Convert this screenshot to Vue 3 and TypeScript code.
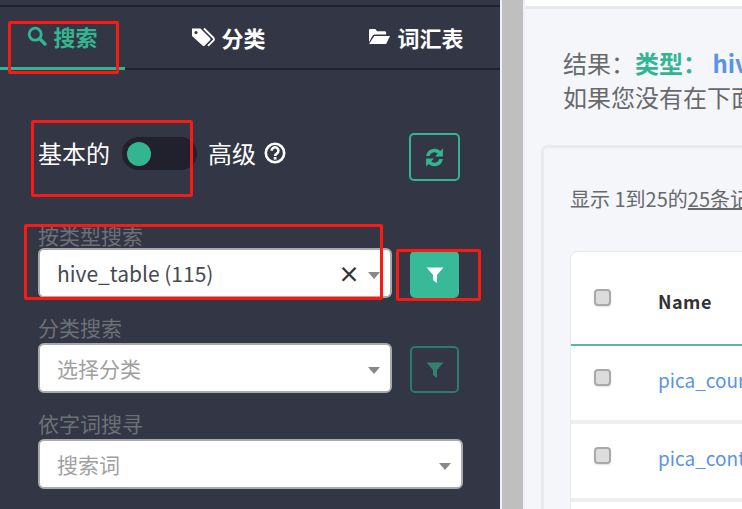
<script setup lang="ts">
const rows: string[] = ['pica_course_detail', 'pica_content_detail', '']
const tabs = [
  { label: '搜索', icon: 'search', active: true },
  { label: '分类', icon: 'tag', active: false },
  { label: '词汇表', icon: 'folder', active: false },
]
</script>

<template>
  <div class="page">
    <aside class="side">
      <nav class="tabs">
        <div v-for="t in tabs" :key="t.label" class="tab" :class="{ active: t.active }">
          <svg v-if="t.icon === 'search'" class="ti" viewBox="0 0 20 20" width="20" height="20"><circle cx="8.2" cy="8.2" r="6" fill="none" stroke="currentColor" stroke-width="2.8"/><path d="M12.5 12.5 18 18" stroke="currentColor" stroke-width="3.2" stroke-linecap="round"/></svg>
          <svg v-else-if="t.icon === 'tag'" class="ti" viewBox="0 0 24 20" width="24" height="20"><path d="M1 1.5h8.5L19 11a1.6 1.6 0 0 1 0 2.3l-5.2 5.2a1.6 1.6 0 0 1-2.3 0L1 9z" fill="currentColor"/><path d="M13 1.5 22.5 11a1.6 1.6 0 0 1 0 2.3L17 18.8" fill="none" stroke="currentColor" stroke-width="1.8"/><circle cx="5" cy="5.5" r="1.6" fill="#333645"/></svg>
          <svg v-else class="ti" viewBox="0 0 24 20" width="23" height="19"><path d="M1 16V3.5A1.5 1.5 0 0 1 2.500 2h5l2 2.500h8A1.500 1.500 0 0 1 19 6v2H7a3 3 0 0 0-2.700 1.700z" fill="currentColor"/><path d="M6.500 9.500H23l-4 8.500H1z" fill="currentColor"/></svg>
          <span>{{ t.label }}</span>
        </div>
      </nav>

      <div class="mode">
        <span class="mode-l">基本的</span>
        <span class="toggle"><i></i></span>
        <span class="mode-r">高级</span>
        <svg class="help" viewBox="0 0 22 22" width="22" height="22"><circle cx="11" cy="11" r="9.200" fill="none" stroke="#fff" stroke-width="2.600"/><path d="M7.600 8.800a3.400 3.400 0 1 1 5.200 2.800c-1.100.7-1.700 1.100-1.700 2.400" fill="none" stroke="#fff" stroke-width="2.600"/><rect x="9.700" y="15" width="2.800" height="2.600" fill="#fff"/></svg>
        <button class="btn refresh">
          <svg viewBox="0 0 20 20" width="21" height="21"><path d="M2 8.500a8 8 0 0 1 13.500-4.600L18 1.500V9h-7.500l2.700-2.700A4.800 4.800 0 0 0 5.400 8.500z" fill="#34b592"/><path d="M18 11.500a8 8 0 0 1-13.500 4.600L2 18.500V11h7.500l-2.700 2.700a4.800 4.800 0 0 0 7.800-2.200z" fill="#34b592"/></svg>
        </button>
      </div>

      <div class="lbl first">按类型搜索</div>
      <div class="fr tight">
        <div class="sel short"><span class="val">hive_table (115)</span><b class="x">×</b><i class="caret"></i></div>
        <button class="btn filter on">
          <svg viewBox="0 0 18 18" width="18" height="18"><path d="M0.500 1.500h17L11 9v8l-4-3V9z" fill="#fff"/></svg>
        </button>
      </div>

      <div class="lbl">分类搜索</div>
      <div class="fr">
        <div class="sel short"><span class="ph">选择分类</span><i class="caret"></i></div>
        <button class="btn filter off">
          <svg viewBox="0 0 18 18" width="18" height="18"><path d="M0.500 1.500h17L11 9v8l-4-3V9z" fill="#34806f"/></svg>
        </button>
      </div>

      <div class="lbl">依字词搜寻</div>
      <div class="fr">
        <div class="sel long"><span class="ph">搜索词</span><i class="caret"></i></div>
      </div>

      <div class="lbl">分文字搜寻</div>
    </aside>

    <div class="gutter"></div>

    <main class="main">
      <div class="topbar"></div>
      <div class="content">
        <p class="res">结果：<strong class="g">类型：</strong> <strong class="b">hive_table</strong></p>
        <p class="res">如果您没有在下面的结果中找到您要的内容</p>
        <section class="panel">
          <div class="count">显示 1到25的<u>25条记录</u></div>
          <div class="table">
            <div class="row head">
              <span class="cb"></span>
              <span class="name">Name</span>
            </div>
            <div v-for="(r, i) in rows" :key="i" class="row">
              <span class="cb"></span>
              <a class="link">{{ r }}</a>
            </div>
          </div>
        </section>
      </div>
    </main>

    <div class="mark m1"></div>
    <div class="mark m2"></div>
    <div class="mark m3"></div>
    <div class="mark m4"></div>
  </div>
</template>

<style>
html, body { margin: 0; overflow: hidden; }
</style>

<style scoped>
.page {
  position: relative;
  width: 742px;
  height: 509px;
  display: flex;
  overflow: hidden;
  font-family: "Noto Sans CJK SC", "Open Sans", sans-serif;
  background: #f5f6fa;
}
.side {
  width: 500px;
  flex: none;
  background: #333645;
  box-sizing: border-box;
  padding-top: 5px;
  overflow: hidden;
}
.tabs {
  height: 61px;
  display: flex;
  border-top: 2px solid #21222c;
  border-bottom: 2px solid #21222c;
}
.tab {
  height: 61px;
  box-sizing: border-box;
  display: flex;
  align-items: center;
  justify-content: center;
  gap: 6px;
  color: #fff;
  font-size: 22px;
  font-weight: 700;
  padding-bottom: 2px;
}
.tab:nth-child(1) { width: 125px; }
.tab:nth-child(2) { width: 207px; }
.tab:nth-child(3) { width: 168px; }
.tab.active { color: #34b592; border-bottom: 3px solid #34b592; height: 63px; }
.mode {
  display: flex;
  align-items: flex-start;
  height: 48px;
  margin-top: 63px;
  padding-left: 38px;
  color: #fff;
  font-size: 24px;
  line-height: 40px;
}
.toggle {
  width: 75px;
  height: 33px;
  border-radius: 17px;
  background: #20212c;
  margin: 4px 0 0 12px;
  display: flex;
  align-items: center;
  padding-left: 5px;
  box-sizing: border-box;
}
.toggle i { width: 24px; height: 24px; border-radius: 50%; background: #34b592; }
.mode-r { margin-left: 11px; }
.help { margin: 9px 0 0 8px; }
.btn {
  padding: 0;
  box-sizing: border-box;
  display: flex;
  align-items: center;
  justify-content: center;
  background: transparent;
  border-radius: 5px;
}
.refresh {
  width: 51px;
  height: 48px;
  border: 2px solid #34b592;
  margin-left: 123px;
}
.lbl {
  margin-left: 38px;
  height: 30px;
  line-height: 28px;
  font-size: 21px;
  color: #6d7177;
  white-space: nowrap;
}
.lbl.first { margin-top: 41px; height: 26px; line-height: 26px; }
.fr {
  display: flex;
  align-items: flex-end;
  height: 50px;
  margin-left: 38px;
  margin-bottom: 16px;
}
.fr.tight { margin-bottom: 15px; }
.sel {
  height: 50px;
  box-sizing: border-box;
  background: #fff;
  border: 2px solid #aaa;
  border-radius: 6px;
  display: flex;
  align-items: center;
  padding-left: 17px;
  font-size: 21px;
  position: relative;
}
.short { width: 354px; }
.long { width: 425px; }
.val { color: #444a52; font-size: 21px; }
.ph { color: #a0a0a0; }
.caret {
  position: absolute;
  right: 10px;
  top: 22px;
  width: 0;
  height: 0;
  border-left: 6px solid transparent;
  border-right: 6px solid transparent;
  border-top: 7px solid #888;
}
.x {
  position: absolute;
  right: 30px;
  top: 7px;
  color: #333;
  font-size: 22px;
  font-weight: 700;
  line-height: 30px;
}
.filter {
  width: 49px;
  height: 47px;
  margin-left: 18px;
}
.filter.on { background: #38b998; border: 0; }
.filter.off { border: 2px solid #2b7a6b; }
.gutter {
  width: 25px;
  flex: none;
  background: #bfbfbf;
  border-left: 2px solid #f0f1f5;
  border-right: 2px solid #f0f1f5;
  box-sizing: border-box;
}
.main {
  flex: 1;
  min-width: 0;
  overflow: hidden;
}
.topbar {
  height: 6px;
  background: #fff;
  border-bottom: 3px solid #e8e9ee;
}
.content { padding: 37px 0 0 38px; width: 600px; }
.res {
  margin: 0;
  font-size: 24px;
  line-height: 34px;
  color: #676a6c;
  white-space: nowrap;
}
.g { color: #34b592; }
.b { color: #5a93e8; }
.panel {
  margin: 31px 0 0 -22px;
  width: 700px;
  height: 500px;
  box-sizing: border-box;
  border: 3px solid #e9eaee;
  border-radius: 6px;
  padding: 36px 0 0 26px;
}
.count { font-size: 20px; color: #676a6c; line-height: 30px; white-space: nowrap; }
.table {
  margin-top: 37px;
  background: #fff;
  border: 1px solid #e8e9ee;
  border-radius: 8px;
}
.row {
  height: 78px;
  box-sizing: border-box;
  display: flex;
  border-bottom: 4px solid #eee;
  padding: 23px 0 0 23px;
}
.row.head { height: 94px; border-bottom: 2px solid #5ab8a0; padding-top: 37px; }
.cb {
  width: 17px;
  height: 17px;
  box-sizing: border-box;
  flex: none;
  background: #dcdcdc;
  border: 2px solid #a9a9a9;
  border-radius: 4px;
  box-shadow: 0 1px 2px rgba(0,0,0,0.12);
}
.name { margin-left: 47px; font-size: 18px; font-weight: 700; color: #333; line-height: 24px; letter-spacing: 0.5px; }
.link { margin-left: 47px; color: #5a93e8; font-size: 19px; line-height: 22px; white-space: nowrap; }
.mark {
  position: absolute;
  box-sizing: border-box;
  border: 3px solid #fb1a12;
  border-radius: 2px;
  pointer-events: none;
}
.m1 { left: 8px; top: 21px; width: 111px; height: 53px; }
.m2 { left: 31px; top: 120px; width: 162px; height: 77px; }
.m3 { left: 24px; top: 224px; width: 359px; height: 76px; }
.m4 { left: 396px; top: 249px; width: 85px; height: 52px; }
</style>
